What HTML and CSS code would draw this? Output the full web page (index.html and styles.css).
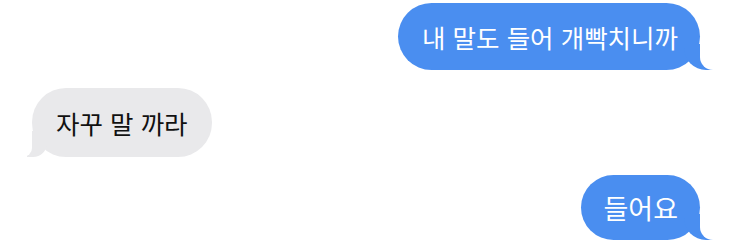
FILE: index.html
```html
<!DOCTYPE html>
<html lang="ko">
<head>
  <meta charset="UTF-8">
  <meta name="viewport" content="width=device-width, initial-scale=1.0">
  <title>메시지</title>
  <link rel="stylesheet" href="styles.css">
</head>
<body>
  <div class="chat">
    <!-- 보낸 메시지 -->
    <div class="row sent">
      <div class="bubble">내 말도 들어 개빡치니까</div>
    </div>

    <!-- 받은 메시지 -->
    <div class="row received">
      <div class="bubble">자꾸 말 까라</div>
    </div>

    <div class="row sent">
      <div class="bubble short">들어요</div>
    </div>
  </div>
</body>
</html>
```

FILE: styles.css
```css
body {
  margin: 0;
  padding: 0;
  background-color: #ffffff;
  font-family: "Noto Sans CJK KR", "Noto Sans", sans-serif;
}

.chat {
  display: flex;
  flex-direction: column;
  gap: 18px;
  padding: 3px 35px 0 32px;
}

.row {
  display: flex;
}

.row.sent {
  justify-content: flex-end;
}

.row.received {
  justify-content: flex-start;
}

.bubble {
  position: relative;
  font-size: 25.5px;
  line-height: 35px;
  padding: 16px 22px 16px 24px;
  border-radius: 34px;
}

.received .bubble {
  padding: 17px 24px;
}

.bubble.short {
  font-size: 27px;
  line-height: 37px;
  padding: 14px 22px;
}

.sent .bubble {
  background-color: #4a8ef0;
  color: #ffffff;
}

.received .bubble {
  background-color: #e9e9eb;
  color: #111111;
}

/* 말풍선 꼬리 */
.bubble::before,
.bubble::after {
  content: "";
  position: absolute;
  bottom: 0;
  height: 26px;
}

.sent .bubble::before {
  right: -14px;
  width: 30px;
  background-color: #4a8ef0;
  border-bottom-left-radius: 22px;
}

.sent .bubble::after {
  right: -22px;
  width: 22px;
  background-color: #ffffff;
  border-bottom-left-radius: 13px;
}

.received .bubble::before {
  left: -5px;
  width: 20px;
  background-color: #e9e9eb;
  border-bottom-right-radius: 14px;
}

.received .bubble::after {
  left: -14px;
  width: 14px;
  background-color: #ffffff;
  border-bottom-right-radius: 9px;
}
```
